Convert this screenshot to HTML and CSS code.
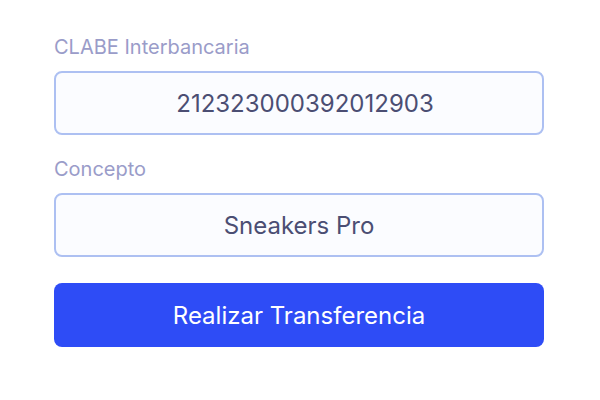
FILE: index.html
```html
<!DOCTYPE html>
<html lang="es">
<head>
<meta charset="utf-8">
<link rel="stylesheet" href="styles.css">
</head>
<body>
<form class="form">
  <div class="field">
    <label class="label" for="clabe">CLABE Interbancaria</label>
    <input class="input input-clabe" id="clabe" type="text" value="212323000392012903">
  </div>
  <div class="field">
    <label class="label" for="concepto">Concepto</label>
    <input class="input" id="concepto" type="text" value="Sneakers Pro">
  </div>
  <button class="button" type="button">Realizar Transferencia</button>
</form>
</body>
</html>
```

FILE: styles.css
```css
html, body {
  margin: 0;
  padding: 0;
  background: #ffffff;
}
body {
  font-family: Inter, "Noto Sans", sans-serif;
}
.form {
  width: 490px;
  margin: 0 0 0 54px;
  padding-top: 35px;
  display: flex;
  flex-direction: column;
  gap: 22px;
}
.field {
  display: flex;
  flex-direction: column;
  gap: 12px;
}
.label {
  font-size: 20px;
  line-height: 24px;
  color: #9a9cc9;
}
.input {
  box-sizing: border-box;
  width: 490px;
  height: 64px;
  border: 2px solid #adc0f2;
  border-radius: 8px;
  background: #fbfcff;
  color: #4b4e73;
  font-family: Inter, "Noto Sans", sans-serif;
  font-size: 24px;
  text-align: center;
  padding: 0 12px;
  outline: none;
}
.input-clabe {
  padding: 0 12px 0 24px;
}
.button {
  box-sizing: border-box;
  width: 490px;
  height: 64px;
  border: none;
  border-radius: 8px;
  background: #2e4cf6;
  color: #ffffff;
  font-family: Inter, "Noto Sans", sans-serif;
  font-size: 24px;
  cursor: pointer;
  margin-top: 4px;
}
```
